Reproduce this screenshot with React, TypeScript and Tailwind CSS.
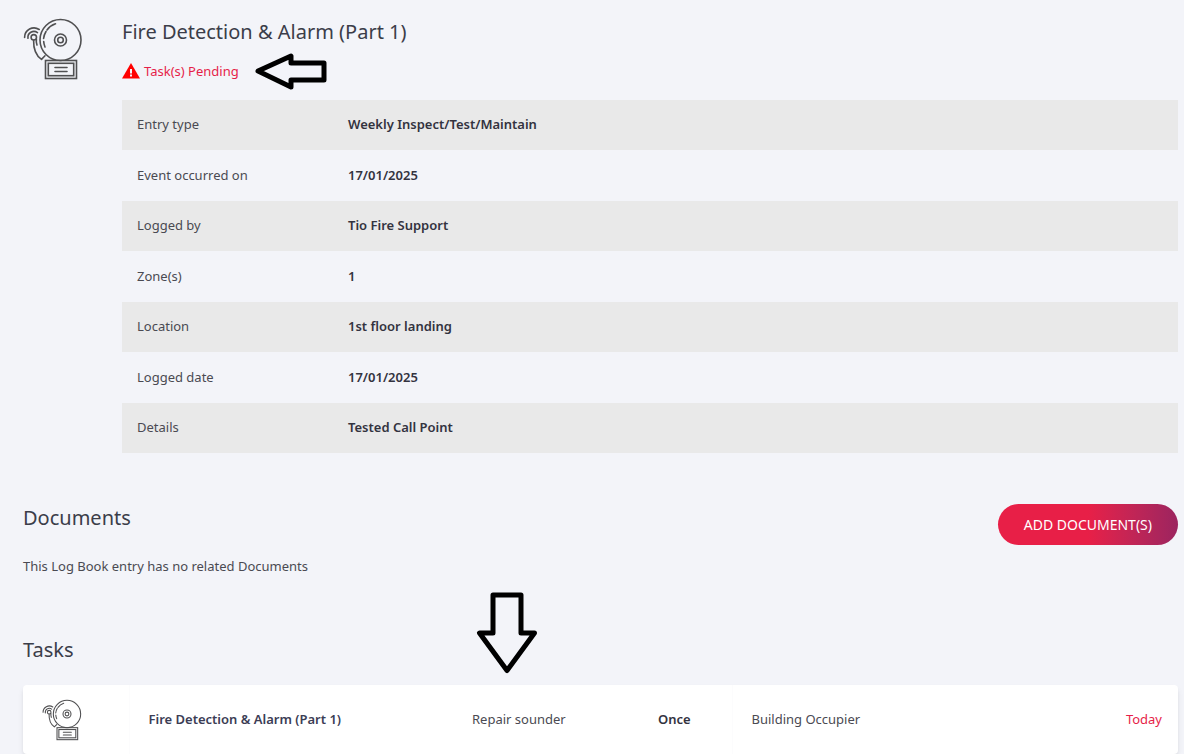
import { type ReactNode } from "react";

interface Detail {
  label: string;
  value: string;
}

const details: Detail[] = [
  { label: "Entry type", value: "Weekly Inspect/Test/Maintain" },
  { label: "Event occurred on", value: "17/01/2025" },
  { label: "Logged by", value: "Tio Fire Support" },
  { label: "Zone(s)", value: "1" },
  { label: "Location", value: "1st floor landing" },
  { label: "Logged date", value: "17/01/2025" },
  { label: "Details", value: "Tested Call Point" },
];

function BellIcon({ className }: { className: string }): ReactNode {
  return (
    <svg
      viewBox="0 0 60 62"
      className={className}
      fill="none"
      stroke="#505052"
      strokeWidth="1.6"
      strokeLinecap="round"
      strokeLinejoin="round"
      aria-hidden="true"
    >
      <circle cx="37.5" cy="22" r="20.5" />
      <circle cx="37.5" cy="22" r="6" />
      <circle cx="37.5" cy="22" r="2.8" />
      <path d="M20.6 20.5A17 17 0 0 1 23 13.5M24 12A17 17 0 0 1 32.5 5.8M20.7 23.5A17 17 0 0 0 22 29" />
      <circle cx="10.8" cy="19.3" r="2.7" />
      <path d="M5 20.3A6 6 0 0 1 14.5 14.6" />
      <path d="M1.6 19.4A9.4 9.4 0 0 1 16.2 11.5" />
      <path d="M10.6 22.2C10.4 30 13 37.5 18.5 41.4L22 37.8M13.4 21.3C13 23.5 13.5 25 14 27" />
      <g strokeLinejoin="miter">
        <rect x="22.5" y="42.5" width="31" height="18" />
        <rect x="25.3" y="45.3" width="25.4" height="12.4" />
      </g>
      <path d="M32 49.5H44M32 53.5H44" />
    </svg>
  );
}

function WarningIcon(): ReactNode {
  return (
    <svg viewBox="0 0 18 16" className="h-4 w-[18px]" aria-hidden="true">
      <path d="M9 0L18 15.5H0Z" fill="#ff0000" />
      <path d="M8 6H10V10.5H8ZM8 11.5H10V13.5H8Z" fill="#f3f4f9" />
    </svg>
  );
}

function LeftArrow(): ReactNode {
  return (
    <svg viewBox="0 0 72 38" className="h-[38px] w-[72px]" aria-hidden="true">
      <path
        d="M3 19L36 4V11H69V28H36V35Z"
        fill="none"
        stroke="#000"
        strokeWidth="5"
        strokeLinejoin="round"
      />
    </svg>
  );
}

function DownArrow(): ReactNode {
  return (
    <svg viewBox="0 0 62 82" className="h-[82px] w-[62px]" aria-hidden="true">
      <path
        d="M17 3H45V41H58.5L31 78.5L3.5 41H17Z"
        fill="none"
        stroke="#000"
        strokeWidth="5"
        strokeLinejoin="round"
      />
    </svg>
  );
}

export default function App(): ReactNode {
  return (
    <main className="min-h-screen bg-[#f3f4f9] pl-[23px] pr-1.5 font-['Noto_Sans',sans-serif] text-[13px] leading-5 text-[#4a4a52]">
      <section className="flex pt-[18px]">
        <BellIcon className="h-[62px] w-[60px] shrink-0" />
        <div className="ml-[39px] min-w-0 flex-1">
          <h1 className="text-xl leading-7 text-[#3b3d49]">
            Fire Detection &amp; Alarm (Part 1)
          </h1>
          <div className="mt-1.5 flex h-[38px] items-center">
            <WarningIcon />
            <span className="ml-1 text-[#e61e49]">Task(s) Pending</span>
            <span className="ml-4">
              <LeftArrow />
            </span>
          </div>
          <table className="mt-2.5 w-full table-fixed border-collapse">
            <tbody>
              {details.map((detail) => (
                <tr key={detail.label} className="h-[51px] odd:h-[50px] odd:bg-[#e9e9e9]">
                  <th scope="row" className="w-[211px] pb-0.5 pl-[15px] text-left font-normal">
                    {detail.label}
                  </th>
                  <td className="pb-0.5 pl-[15px] font-semibold text-[#33333f]">
                    {detail.value}
                  </td>
                </tr>
              ))}
            </tbody>
          </table>
        </div>
      </section>

      <section className="mt-[51px]">
        <div className="flex items-start justify-between">
          <h2 className="text-xl leading-7 text-[#3b3d49]">Documents</h2>
          <button
            type="button"
            className="h-[41px] rounded-full bg-linear-to-r from-[#e81f47] from-50% to-[#9c245f] px-[26px] text-sm text-white"
          >
            ADD DOCUMENT(S)
          </button>
        </div>
        <p className="mt-[11px]">This Log Book entry has no related Documents</p>
      </section>

      <section className="relative mt-[60px]">
        <div className="absolute -top-11 left-[453px]">
          <DownArrow />
        </div>
        <h2 className="text-xl leading-7 text-[#3b3d49]">Tasks</h2>
        <div className="mt-[21px] rounded-sm bg-white shadow-md shadow-black/10">
          <table className="w-full table-fixed">
            <tbody>
              <tr className="h-[69px]">
                <td className="w-[106px] border-r border-[#fcfcfd] pl-[19px]">
                  <BellIcon className="h-[42px] w-10" />
                </td>
                <td className="w-[324px] pb-0.5 pl-[19px] font-semibold text-[#3b3d55]">
                  Fire Detection &amp; Alarm (Part 1)
                </td>
                <td className="w-[186px] pb-0.5 pl-[19px]">Repair sounder</td>
                <td className="w-[93px] border-r border-[#fcfcfd] pb-0.5 pl-[19px] font-semibold text-[#33333f]">
                  Once
                </td>
                <td className="pb-0.5 pl-[19px]">Building Occupier</td>
                <td className="w-[120px] pb-0.5 pr-4 text-right text-[#e61e49]">Today</td>
              </tr>
            </tbody>
          </table>
        </div>
      </section>
    </main>
  );
}
